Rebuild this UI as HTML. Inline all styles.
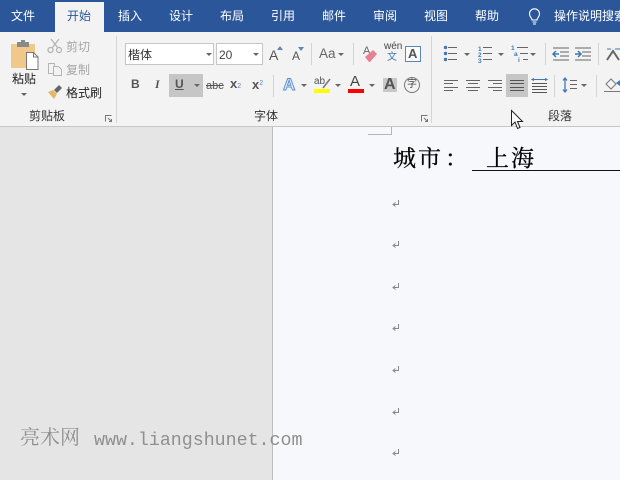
<!DOCTYPE html>
<html lang="zh"><head><meta charset="utf-8">
<style>
html,body{margin:0;padding:0}
#r{position:relative;width:620px;height:480px;overflow:hidden;background:#e6e6e6;font-family:"Liberation Sans","Noto Sans CJK SC",sans-serif;color:#333}
.a{position:absolute}
.t{position:absolute;white-space:nowrap;font-size:12px;line-height:16px}
.tab{position:absolute;top:8px;color:#fff;font-size:12px;line-height:16px;white-space:nowrap}
.sep{position:absolute;width:1px;background:#d4d4d4}
.arr{position:absolute;width:0;height:0;border-left:3px solid transparent;border-right:3px solid transparent;border-top:3px solid #666}
.n{position:absolute;white-space:nowrap;font-size:6.500px;line-height:7px;font-weight:bold;color:#3f78b5}
.h{position:absolute;white-space:nowrap;top:145px;font-size:23px;letter-spacing:2px;line-height:28px;color:#000;-webkit-text-stroke:.25px #000;font-family:'Liberation Serif','Noto Serif CJK SC',serif}
svg{position:absolute;overflow:visible}
.ret{left:392px}
</style></head><body><div id="r">

<!-- title/tab bar -->
<div class="a" style="left:0;top:0;width:620px;height:32px;background:#2b579a"></div>
<div class="a" style="left:55px;top:2px;width:49px;height:30px;background:#f3f3f3"></div>
<div class="tab" style="left:11px">文件</div>
<div class="tab" style="left:67px;color:#2b579a">开始</div>
<div class="tab" style="left:118px">插入</div>
<div class="tab" style="left:169px">设计</div>
<div class="tab" style="left:220px">布局</div>
<div class="tab" style="left:271px">引用</div>
<div class="tab" style="left:322px">邮件</div>
<div class="tab" style="left:373px">审阅</div>
<div class="tab" style="left:424px">视图</div>
<div class="tab" style="left:475px">帮助</div>
<svg style="left:527px;top:7px" width="16" height="19" viewBox="0 0 16 19" fill="none" stroke="#fff" stroke-width="1.100"><path d="M5 13c0-2-2.500-3-2.500-6.200a5 5 0 0 1 10 0C12.500 10 10 11 10 13zM5.500 15h4M6 17h3"/></svg>
<div class="tab" style="left:554px">操作说明搜索</div>

<!-- ribbon -->
<div class="a" style="left:0;top:32px;width:620px;height:94px;background:#f3f3f3"></div>
<div class="a" style="left:0;top:126px;width:620px;height:1px;background:#c6c6c6"></div>
<div class="sep" style="left:116px;top:36px;height:87px"></div>
<div class="sep" style="left:431px;top:36px;height:87px"></div>

<!-- clipboard -->
<svg style="left:10px;top:39px" width="30" height="32" viewBox="0 0 30 32"><rect x="1" y="5" width="24" height="24" rx="1" fill="#f0c98a"/><rect x="7" y="3" width="12" height="5" fill="#8a8a8a"/><rect x="11" y="1" width="4" height="3" fill="#8a8a8a"/><path d="M16.500 13.500h7l4.500 4.500v12.500h-11.500z" fill="#fff" stroke="#777"/><path d="M23.500 13.500v4.500h4.500" fill="none" stroke="#777"/></svg>
<div class="t" style="left:12px;top:71px;color:#222">粘贴</div>
<div class="arr" style="left:21px;top:93px"></div>
<svg style="left:47px;top:38px" width="16" height="16" viewBox="0 0 16 16" fill="none" stroke="#b5b5b5" stroke-width="1.300"><path d="M4 1l7 9M12 1L5 10"/><circle cx="3.500" cy="12" r="2.500"/><circle cx="12" cy="12" r="2.500"/></svg>
<div class="t" style="left:66px;top:39px;color:#a6a6a6">剪切</div>
<svg style="left:47px;top:61px" width="16" height="16" viewBox="0 0 16 16" fill="#f3f3f3" stroke="#b5b5b5"><path d="M1.500 2.500h6v10h-6z"/><path d="M6.500 5.500h5l3 3v6h-8z"/></svg>
<div class="t" style="left:66px;top:62px;color:#a6a6a6">复制</div>
<svg style="left:47px;top:84px" width="17" height="16" viewBox="0 0 17 16"><path d="M1 8l5-2 4 4-3 5z" fill="#e3b866"/><path d="M7 6l5-5 3 3-5 5z" fill="#666"/></svg>
<div class="t" style="left:66px;top:85px;color:#222">格式刷</div>
<div class="t" style="left:29px;top:108px;color:#333">剪贴板</div>
<svg style="left:105px;top:115px" width="7" height="7" viewBox="0 0 7 7" fill="none" stroke="#777"><path d="M.5 6.500V.5h6M3 3l3.500 3.500M6.500 4v2.500H4"/></svg>

<!-- font -->
<div class="a" style="left:125px;top:43px;width:89px;height:22px;background:#fff;border:1px solid #c6c6c6;box-sizing:border-box"></div>
<div class="t" style="left:128px;top:47px;color:#333">楷体</div>
<div class="arr" style="left:206px;top:53px"></div>
<div class="a" style="left:216px;top:43px;width:47px;height:22px;background:#fff;border:1px solid #c6c6c6;box-sizing:border-box"></div>
<div class="t" style="left:219px;top:47px;color:#444">20</div>
<div class="arr" style="left:253px;top:53px"></div>
<div class="t" style="left:269px;top:45px;font-size:14px;line-height:20px;color:#555">A</div>
<div class="a" style="left:277px;top:46px;width:0;height:0;border-left:3px solid transparent;border-right:3px solid transparent;border-bottom:4px solid #5b87bd"></div>
<div class="t" style="left:292px;top:48px;font-size:12px;color:#555">A</div>
<div class="a" style="left:298px;top:47px;width:0;height:0;border-left:3px solid transparent;border-right:3px solid transparent;border-top:4px solid #5b87bd"></div>
<div class="sep" style="left:311px;top:43px;height:22px"></div>
<div class="t" style="left:319px;top:46px;font-size:13.500px;color:#666">Aa</div>
<div class="arr" style="left:338px;top:53px"></div>
<div class="sep" style="left:353px;top:43px;height:22px"></div>
<div class="t" style="left:363px;top:43px;font-size:11px;color:#666">A</div>
<svg style="left:363px;top:47px" width="16" height="16" viewBox="0 0 16 16"><path d="M2 10l8-7 4 4-7 8H6z" fill="#e8808f"/></svg>
<div class="t" style="left:384px;top:41px;font-size:10px;line-height:12px;color:#444">wén</div>
<div class="t" style="left:387px;top:52px;font-size:10px;line-height:11px;color:#3f78b5">文</div>
<div class="a" style="left:405px;top:46px;width:16px;height:16px;border:1px solid #5b87bd;box-sizing:border-box;background:#fbfbfb"></div>
<div class="t" style="left:408px;top:46px;font-size:13px;font-weight:bold;color:#555">A</div>

<div class="t" style="left:131px;top:76px;font-weight:bold;color:#555">B</div>
<div class="t" style="left:155px;top:76px;font-style:italic;font-weight:bold;font-family:'Liberation Serif',serif;color:#555">I</div>
<div class="a" style="left:169px;top:74px;width:34px;height:23px;background:#c6c6c6"></div>
<div class="t" style="left:175px;top:76px;font-weight:bold;text-decoration:underline;color:#555">U</div>
<div class="arr" style="left:194px;top:84px"></div>
<div class="t" style="left:206px;top:78px;font-size:11px;color:#555;text-decoration:line-through">abc</div>
<div class="t" style="left:230px;top:76px;font-size:13px;font-weight:bold;color:#555">x<span style="font-size:7px;color:#5b87bd;font-weight:normal">2</span></div>
<div class="t" style="left:252px;top:76px;font-size:13px;font-weight:bold;color:#555">x<span style="font-size:7px;color:#5b87bd;vertical-align:4px;font-weight:normal">2</span></div>
<div class="sep" style="left:273px;top:75px;height:22px"></div>
<div class="t" style="left:283px;top:75px;font-size:17px;line-height:20px;font-weight:bold;color:#eaf2fb;-webkit-text-stroke:1px #5b8fd0">A</div>
<div class="arr" style="left:301px;top:84px"></div>
<div class="t" style="left:314px;top:76px;font-size:10px;line-height:12px;color:#555">ab</div>
<svg style="left:322px;top:78px" width="10" height="11" viewBox="0 0 10 11"><path d="M1 10L8 1" stroke="#777" stroke-width="1.500"/></svg>
<div class="a" style="left:314px;top:89px;width:16px;height:4px;background:#ff0"></div>
<div class="arr" style="left:335px;top:84px"></div>
<div class="t" style="left:350px;top:74px;font-size:15px;line-height:16px;color:#444">A</div>
<div class="a" style="left:348px;top:89px;width:16px;height:4px;background:#f00"></div>
<div class="arr" style="left:369px;top:84px"></div>
<div class="a" style="left:383px;top:78px;width:14px;height:14px;background:#c8c8c8"></div>
<div class="t" style="left:384px;top:77px;font-size:16px;font-weight:bold;color:#555">A</div>
<div class="a" style="left:404px;top:77px;width:16px;height:16px;border:1px solid #777;border-radius:50%;box-sizing:border-box"></div>
<div class="t" style="left:407px;top:79px;font-size:10px;line-height:12px;color:#444">字</div>
<div class="t" style="left:254px;top:108px;color:#333">字体</div>
<svg style="left:421px;top:115px" width="7" height="7" viewBox="0 0 7 7" fill="none" stroke="#777"><path d="M.5 6.500V.5h6M3 3l3.500 3.500M6.500 4v2.500H4"/></svg>

<!-- paragraph -->
<svg style="left:443px;top:46px" width="180" height="50" viewBox="0 0 180 50" fill="none" stroke="#666" stroke-width="1">
<path d="M5 1.500h9M5 7.500h9M5 13.500h9"/>
<g fill="#3f78b5" stroke="none"><circle cx="2.500" cy="1.500" r="1.700"/><circle cx="2.500" cy="7.500" r="1.700"/><circle cx="2.500" cy="13.500" r="1.700"/></g>
<path d="M40 1.500h9M40 7.500h9M40 13.500h9"/>
<path d="M74 1.500h11M77 7.500h8M80 13.500h5"/>
<path d="M110 2h16M117 6h9M117 10h9M110 14h16"/>
<path d="M116 8h-6M113 5l-3 3 3 3" stroke="#3f78b5" stroke-width="1.500"/>
<path d="M132 2h16M139 6h9M139 10h9M132 14h16"/>
<path d="M132 8h6M135 5l3 3-3 3" stroke="#3f78b5" stroke-width="1.500"/>
<path d="M1 34.500h14M1 37.500h9M1 41.500h14M1 44.500h9"/>
<path d="M23 34.500h14M25 37.500h10M23 41.500h14M25 44.500h10"/>
<path d="M45 34.500h14M50 37.500h9M45 41.500h14M50 44.500h9"/>
</svg>
<div class="n" style="left:478px;top:46px">1</div>
<div class="n" style="left:478px;top:52px">2</div>
<div class="n" style="left:478px;top:58px">3</div>
<div class="n" style="left:511px;top:45px">1</div>
<div class="n" style="left:514px;top:51px">a</div>
<div class="n" style="left:518px;top:57px">i</div>
<div class="arr" style="left:464px;top:53px"></div>
<div class="arr" style="left:498px;top:53px"></div>
<div class="arr" style="left:530px;top:53px"></div>
<div class="sep" style="left:545px;top:43px;height:22px"></div>
<div class="sep" style="left:598px;top:43px;height:22px"></div>
<div class="a" style="left:506px;top:74px;width:22px;height:23px;background:#c6c6c6"></div>
<svg style="left:510px;top:78px" width="38" height="16" viewBox="0 0 38 16" fill="none" stroke="#555"><path d="M0 2.500h14M0 5.500h14M0 9.500h14M0 12.500h14"/><path d="M22 5.500h15M22 8.500h15M22 11.500h15M22 14.500h15"/><path d="M22 1.500h15M24 .5l-2 1 2 1M35 .5l2 1-2 1" stroke="#3f78b5"/></svg>
<div class="sep" style="left:554px;top:75px;height:22px"></div>
<svg style="left:562px;top:77px" width="30" height="17" viewBox="0 0 30 17" fill="none"><path d="M3 1v14M1 3.500L3 1l2 2.500M1 12.500L3 15l2-2.500" stroke="#3f78b5" stroke-width="1.300"/><path d="M8 3.500h7M8 7.500h7M8 11.500h7" stroke="#666"/></svg>
<div class="arr" style="left:581px;top:84px"></div>
<div class="sep" style="left:596px;top:75px;height:22px"></div>
<svg style="left:604px;top:76px" width="16" height="18" viewBox="0 0 16 18" fill="none" stroke="#777"><path d="M2 8l5-5 5 5-5 5z" fill="#f4f4f4"/><path d="M0 15.500h16"/><path d="M12 7l4 3v-6z" fill="#3f78b5" stroke="none"/></svg>
<svg style="left:606px;top:46px" width="14" height="16" viewBox="0 0 14 16" fill="none"><path d="M1 3h4M9 3h5" stroke="#3f78b5"/><path d="M1 14L7 5l6 9" stroke="#666" stroke-width="2"/></svg>
<div class="t" style="left:548px;top:108px;color:#333">段落</div>

<!-- document area -->
<div class="a" style="left:0;top:127px;width:272px;height:353px;background:#e5e5e5"></div>
<div class="a" style="left:272px;top:127px;width:1px;height:353px;background:#bdbdbd"></div>
<div class="a" style="left:273px;top:127px;width:347px;height:353px;background:#f7f8fb"></div>
<div class="a" style="left:368px;top:127px;width:24px;height:8px;border-right:1px solid #b5b5b5;border-bottom:1px solid #b5b5b5;box-sizing:border-box"></div>
<div class="h" style="left:393px">城市</div>
<div class="h" style="left:445px">：</div>
<div class="h" style="left:486px">上海</div>
<div class="a" style="left:472px;top:170px;width:148px;height:1px;background:#111"></div>

<svg class="ret" style="top:200px" width="8" height="8" viewBox="0 0 8 8" fill="none" stroke="#888"><path d="M6.500 0v4.500H1M3.500 2.500L1 4.500l2.500 2"/></svg>
<svg class="ret" style="top:241px" width="8" height="8" viewBox="0 0 8 8" fill="none" stroke="#888"><path d="M6.500 0v4.500H1M3.500 2.500L1 4.500l2.500 2"/></svg>
<svg class="ret" style="top:283px" width="8" height="8" viewBox="0 0 8 8" fill="none" stroke="#888"><path d="M6.500 0v4.500H1M3.500 2.500L1 4.500l2.500 2"/></svg>
<svg class="ret" style="top:324px" width="8" height="8" viewBox="0 0 8 8" fill="none" stroke="#888"><path d="M6.500 0v4.500H1M3.500 2.500L1 4.500l2.500 2"/></svg>
<svg class="ret" style="top:366px" width="8" height="8" viewBox="0 0 8 8" fill="none" stroke="#888"><path d="M6.500 0v4.500H1M3.500 2.500L1 4.500l2.500 2"/></svg>
<svg class="ret" style="top:408px" width="8" height="8" viewBox="0 0 8 8" fill="none" stroke="#888"><path d="M6.500 0v4.500H1M3.500 2.500L1 4.500l2.500 2"/></svg>
<svg class="ret" style="top:449px" width="8" height="8" viewBox="0 0 8 8" fill="none" stroke="#888"><path d="M6.500 0v4.500H1M3.500 2.500L1 4.500l2.500 2"/></svg>

<!-- watermark -->
<div class="t" style="left:20px;top:428px;font-size:20px;line-height:24px;color:#8f8f8f;font-family:'Liberation Mono','Noto Serif CJK SC',monospace">亮术网</div>
<div class="t" style="left:94px;top:429px;font-size:18.300px;line-height:24px;color:#8f8f8f;font-family:'Liberation Mono',monospace">www.liangshunet.com</div>

<!-- cursor -->
<svg style="left:511px;top:110px" width="14" height="20" viewBox="0 0 14 20"><path d="M.5.500v15l3.500-3.500 2.500 6.500 2.500-1-2.500-6h5z" fill="#fff" stroke="#222"/></svg>

</div></body></html>
